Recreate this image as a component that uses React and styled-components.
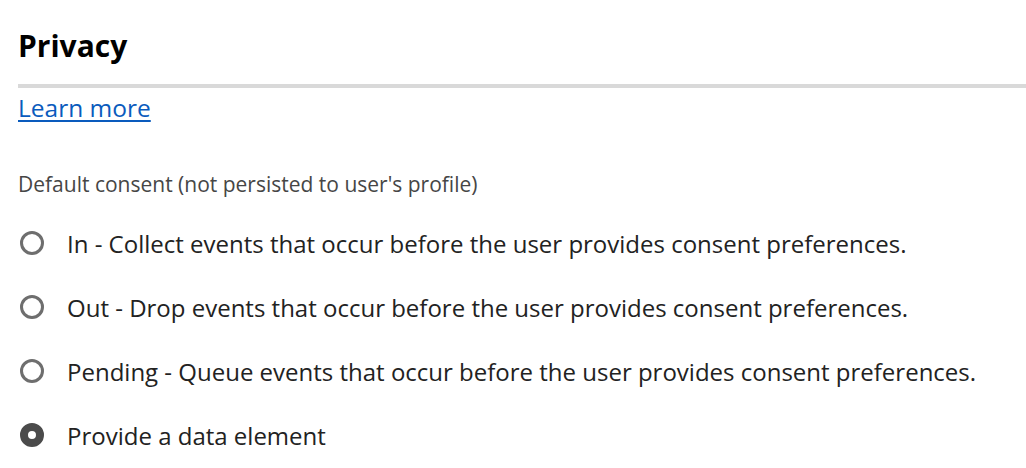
import React from "react";
import styled, { createGlobalStyle } from "styled-components";

const Global = createGlobalStyle`
  html, body { margin: 0; padding: 0; background: #fff; }
  body { font-family: "Open Sans", "Liberation Sans", sans-serif; }
`;

const Page = styled.div`
  padding: 24px 0 0 18px;
`;

const Title = styled.h2`
  margin: 0;
  font-size: 30px;
  font-weight: 700;
  color: #000;
  line-height: 44px;
`;

const Divider = styled.hr`
  border: none;
  height: 4px;
  background: #d9d9d9;
  margin: 16px 0 4px 0;
`;

const Link = styled.a`
  font-size: 24.5px;
  color: #0a5bbd;
  text-decoration: underline;
  text-underline-offset: 3px;
  line-height: 32px;
  display: inline-block;
`;

const Label = styled.div`
  margin-top: 48px;
  font-size: 21px;
  color: #464646;
  line-height: 24px;
`;

const Group = styled.div`
  display: flex;
  flex-direction: column;
  margin-top: 15px;
`;

const Row = styled.label`
  display: flex;
  align-items: center;
  height: 64px;
  font-size: 24px;
  color: #222;
  cursor: pointer;
`;

const Circle = styled.span`
  box-sizing: border-box;
  width: 24px;
  height: 24px;
  border-radius: 50%;
  margin-left: 2px;
  margin-right: 23px;
  flex: none;
  border: ${(p) => (p.$checked ? "8px solid #4b4b4b" : "3px solid #6e6e6e")};
  background: #fff;
`;

const options = [
  { text: "In - Collect events that occur before the user provides consent preferences." },
  { text: "Out - Drop events that occur before the user provides consent preferences." },
  { text: "Pending - Queue events that occur before the user provides consent preferences." },
  { text: "Provide a data element", checked: true },
];

export default function App() {
  return (
    <Page>
      <Global />
      <Title>Privacy</Title>
      <Divider />
      <Link href="#">Learn more</Link>
      <Label>Default consent (not persisted to user's profile)</Label>
      <Group>
        {options.map((o) => (
          <Row key={o.text}>
            <Circle $checked={o.checked} />
            {o.text}
          </Row>
        ))}
      </Group>
    </Page>
  );
}
